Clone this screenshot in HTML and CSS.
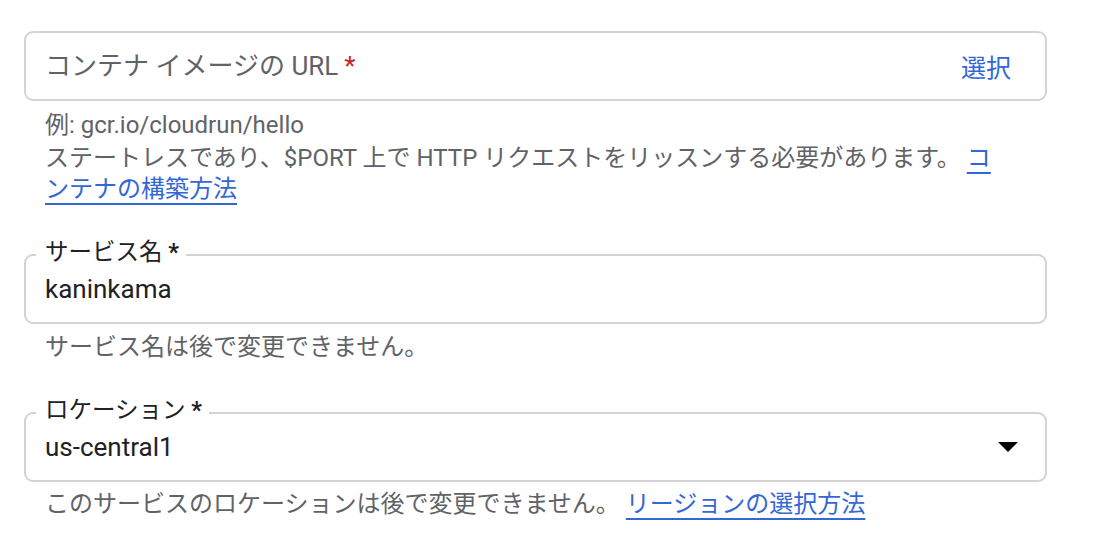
FILE: index.html
```html
<!DOCTYPE html>
<html lang="ja">
<head>
<meta charset="utf-8">
<title>Cloud Run サービスの作成</title>
<link rel="stylesheet" href="styles.css">
</head>
<body>
<form class="form">
  <div class="field">
    <div class="box box-url">
      <span class="placeholder">コンテナ イメージの URL<span class="req-red">*</span></span>
      <button type="button" class="select-btn">選択</button>
    </div>
    <div class="hint">
      <div class="hint-example">例: gcr.io/cloudrun/hello</div>
      <div class="hint-desc">ステートレスであり、$PORT 上で HTTP リクエストをリッスンする必要があります。 <a class="link" href="#">コンテナの構築方法</a></div>
    </div>
  </div>

  <div class="field field-name">
    <div class="box box-outlined">
      <span class="float-label">サービス名 <span class="req">*</span></span>
      <span class="value">kaninkama</span>
    </div>
    <div class="hint hint-single">サービス名は後で変更できません。</div>
  </div>

  <div class="field field-location">
    <div class="box box-outlined box-select">
      <span class="float-label">ロケーション <span class="req">*</span></span>
      <span class="value">us-central1</span>
      <svg class="arrow" width="20" height="10" viewBox="0 0 20 10" aria-hidden="true"><polygon points="0,0 20,0 10,10" fill="#000"/></svg>
    </div>
    <div class="hint hint-single hint-last">このサービスのロケーションは後で変更できません。 <a class="link" href="#">リージョンの選択方法</a></div>
  </div>
</form>
</body>
</html>
```

FILE: styles.css
```css
html, body {
  margin: 0;
  padding: 0;
  background: #ffffff;
}

body {
  font-family: Roboto, "Noto Sans CJK JP", sans-serif;
  color: #202124;
}

.form {
  width: 1023px;
  padding: 31px 0 0 24px;
}

.box {
  position: relative;
  box-sizing: border-box;
  height: 70px;
  border: 2px solid #d3d3d3;
  border-radius: 9px;
  display: flex;
  align-items: center;
  padding: 0 34px 0 19px;
}

.placeholder {
  flex: 1;
  font-size: 26px;
  color: #5f6368;
  line-height: 30px;
}

.req-red {
  color: #c5221f;
  margin-left: 6px;
}

.select-btn {
  border: none;
  background: none;
  padding: 0;
  font-family: Roboto, "Noto Sans CJK JP", sans-serif;
  font-size: 25px;
  color: #3367d6;
  cursor: pointer;
}

.hint {
  font-size: 24px;
  color: #5f6368;
  padding: 0 36px 0 21px;
}

.box-url + .hint {
  margin-top: 8px;
}

.hint-example {
  line-height: 32px;
}

.hint-desc {
  line-height: 31px;
  padding-top: 2px;
}

.link {
  color: #3367d6;
  text-decoration: underline;
  text-decoration-thickness: 2px;
  text-underline-offset: 6px;
}

.field-name {
  margin-top: 49px;
}

.field-location {
  margin-top: 49px;
}

.float-label {
  position: absolute;
  left: 10px;
  top: -18px;
  padding: 0 7px 0 9px;
  background: #ffffff;
  font-size: 23.5px;
  line-height: 28px;
  color: #202124;
}

.req {
  font-weight: 700;
}

.value {
  flex: 1;
  font-size: 26px;
  line-height: 30px;
  color: #202124;
}

.box-select {
  padding-right: 27px;
}

.arrow {
  flex: none;
}

.hint-single {
  line-height: 32px;
  margin-top: 7px;
}

.hint-last {
  margin-top: 6px;
}
```
